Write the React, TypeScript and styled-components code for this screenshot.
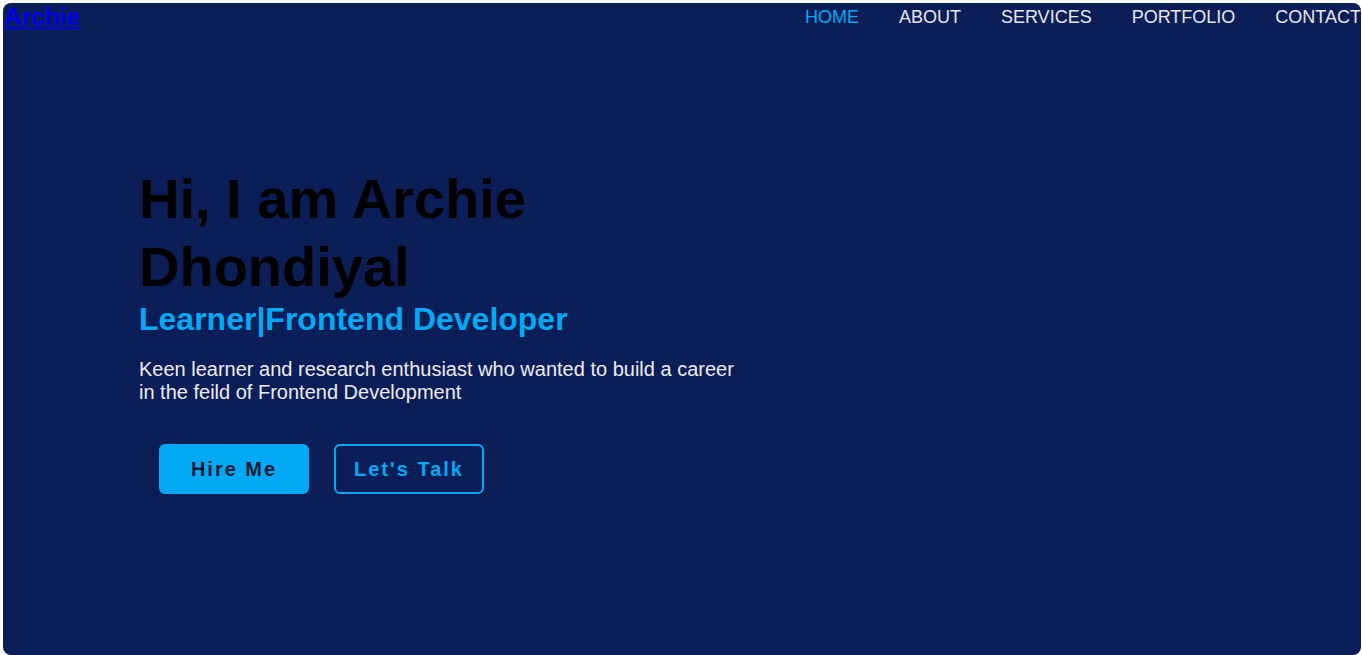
import styled, { createGlobalStyle } from "styled-components";

const accent = "#03a9f4";

const GlobalStyle = createGlobalStyle`
  * {
    box-sizing: border-box;
  }
  body {
    margin: 0;
    padding: 3px 1px 0 3px;
    background: #ffffff;
    font-family: "Liberation Sans", Arial, sans-serif;
    overflow: hidden;
  }
`;

const Page = styled.main`
  height: 652px;
  background: #0c1e57;
  border-radius: 8px;
  overflow: hidden;
`;

const Header = styled.header`
  display: flex;
  align-items: center;
  justify-content: space-between;
  padding-left: 1px;
`;

const Logo = styled.a`
  font-size: 24.5px;
  font-weight: 700;
  color: #0000ee;
  text-decoration: underline;
`;

const NavList = styled.ul`
  display: flex;
  gap: 40px;
  margin: 0;
  padding: 0;
  list-style: none;
`;

const NavLink = styled.a<{ $active?: boolean }>`
  font-size: 18px;
  color: ${(p) => (p.$active ? accent : "#e6e6ea")};
  text-decoration: none;
`;

const Hero = styled.section`
  width: 736px;
  margin-top: 134px;
  padding-left: 136px;
`;

const Title = styled.h1`
  margin: 0;
  font-size: 56px;
  line-height: 68px;
  font-weight: 700;
  color: #000000;
`;

const Subtitle = styled.h2`
  margin: 0;
  font-size: 32px;
  font-weight: 700;
  color: ${accent};
`;

const Intro = styled.p`
  margin: 20px 0 0;
  font-size: 20px;
  line-height: 23px;
  color: #ececf0;
`;

const Actions = styled.div`
  display: flex;
  gap: 25px;
  margin-top: 40px;
  padding-left: 20px;
`;

const Button = styled.button<{ $outline?: boolean }>`
  width: 150px;
  height: 50px;
  border-radius: 6px;
  border: 2px solid ${accent};
  background: ${(p) => (p.$outline ? "transparent" : accent)};
  color: ${(p) => (p.$outline ? accent : "#0f1a33")};
  font-family: "Liberation Sans", Arial, sans-serif;
  font-size: 20px;
  font-weight: 700;
  letter-spacing: 2px;
  cursor: pointer;
`;

const links = ["HOME", "ABOUT", "SERVICES", "PORTFOLIO", "CONTACT"];

export default function App() {
  return (
    <>
      <GlobalStyle />
      <Page>
        <Header>
          <Logo href="#">Archie</Logo>
          <nav>
            <NavList>
              {links.map((link, i) => (
                <li key={link}>
                  <NavLink href="#" $active={i === 0}>
                    {link}
                  </NavLink>
                </li>
              ))}
            </NavList>
          </nav>
        </Header>
        <Hero>
          <Title>Hi, I am Archie Dhondiyal</Title>
          <Subtitle>Learner|Frontend Developer</Subtitle>
          <Intro>
            Keen learner and research enthusiast who wanted to build a career
            in the feild of Frontend Development
          </Intro>
          <Actions>
            <Button>Hire Me</Button>
            <Button $outline>Let's Talk</Button>
          </Actions>
        </Hero>
      </Page>
    </>
  );
}
